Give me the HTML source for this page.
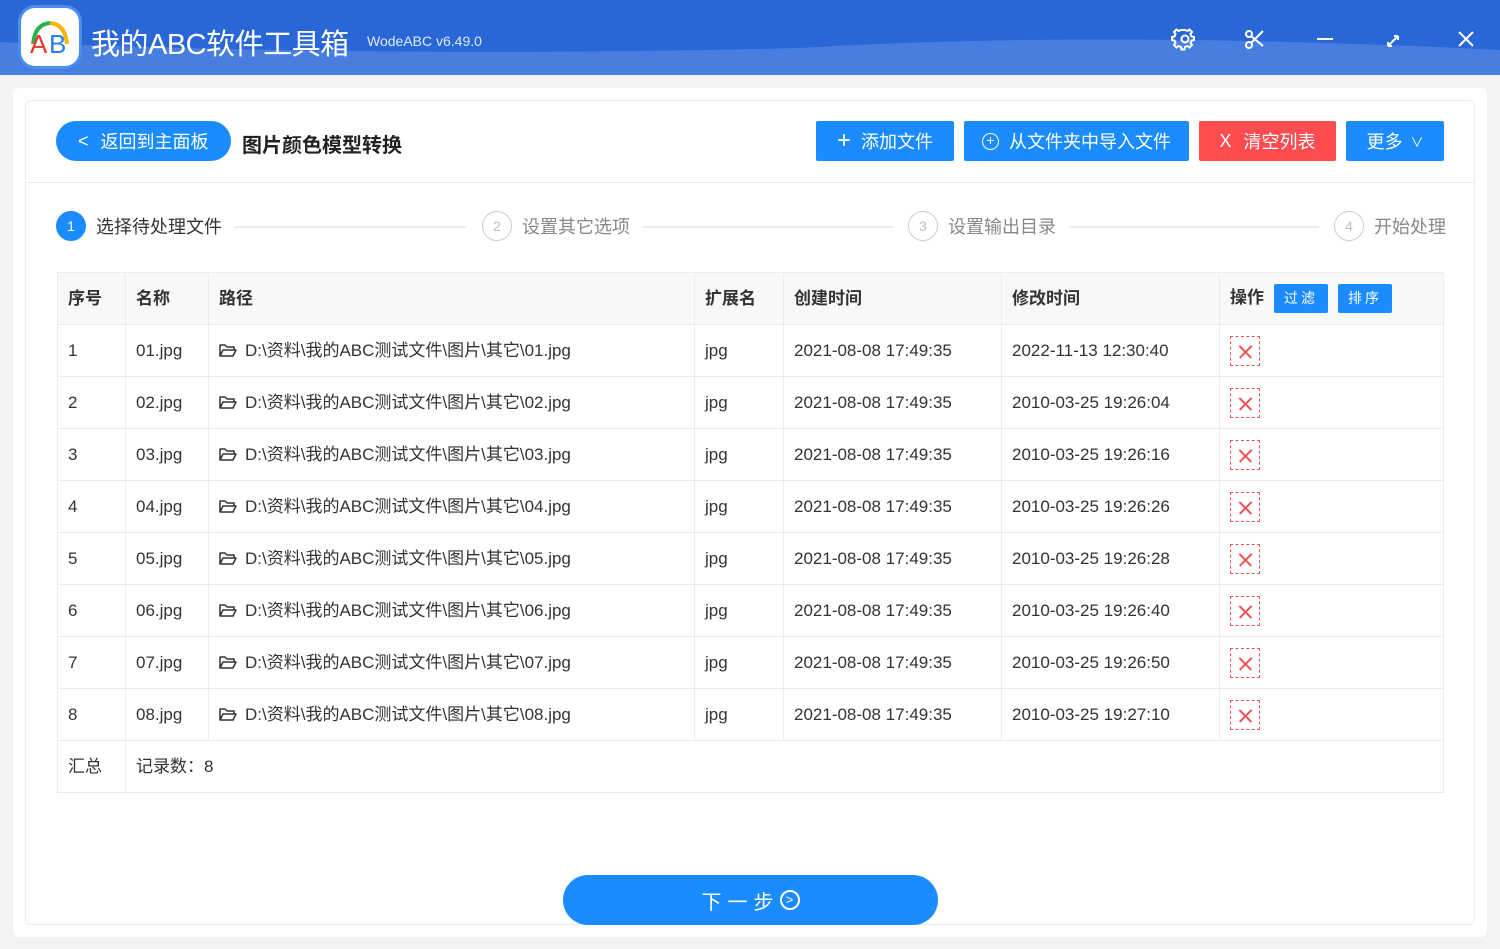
<!DOCTYPE html>
<html><head><meta charset="utf-8"><style>
*{box-sizing:border-box;margin:0;padding:0}
body{width:1500px;height:949px;background:#f3f3f3;font-family:"Liberation Sans","Noto Sans CJK SC",sans-serif;position:relative;overflow:hidden;color:#333}
.hdr{position:absolute;left:0;top:0;width:1500px;height:75px;background:#2a67d6;overflow:hidden}
.abs{position:absolute}
.btn{position:absolute;height:40px;top:121px;color:#fff;font-size:18px;display:flex;align-items:center;justify-content:center;border-radius:2px;background:#1a8cff}
table{position:absolute;left:57px;top:272px;border-collapse:collapse;font-size:17px;color:#333}
td,th{border:1px solid #ececec;text-align:left;padding-left:10px;height:52px;padding-top:0;padding-bottom:0;line-height:20px}
th{background:#f8f8f8;font-weight:bold;height:52px}
.x{display:inline-block;width:30px;height:30px;border:1px dashed #f05050;position:relative;vertical-align:middle}
.x:before,.x:after{content:"";position:absolute;left:6px;top:14px;width:17px;height:1.5px;background:#f05050;transform:rotate(45deg)}
.x:after{transform:rotate(-45deg)}
.step{position:absolute;top:211px;font-size:18px;color:#888;display:flex;align-items:center}
.c{width:30px;height:30px;border-radius:50%;border:1px solid #ccc;color:#bbb;font-size:14px;display:flex;align-items:center;justify-content:center;margin-right:10px}
.line{position:absolute;top:226px;height:2px;background:#ececec}
.tag{display:inline-block;background:#1a8cff;color:#fff;font-size:14px;font-weight:normal;width:54px;text-align:center;height:29px;line-height:29px;border-radius:2px;margin-left:10px;vertical-align:middle;letter-spacing:3px}
.f{display:inline-block;width:18px;height:13px;vertical-align:-1px;margin-right:8px}
</style></head><body>
<div class="hdr">
<svg class="abs" style="left:0;top:0" width="1500" height="75"><path d="M0 42 Q400 58 800 48 Q1100 30 1500 50 L1500 75 L0 75Z" fill="#487ee0"/></svg>
<div class="abs" style="left:21px;top:8px;width:58px;height:58px;border-radius:14px;background:#fff;box-shadow:0 0 0 3px #4a8ef0">
<svg width="58" height="58"><path d="M12 36 Q14 16 29 15" stroke="#2bb24c" stroke-width="4" fill="none"/><path d="M29 15 Q44 16 46 36" stroke="#f6b400" stroke-width="4" fill="none"/><text x="9" y="45" font-size="26" font-family="Liberation Sans" fill="#e33">A</text><text x="28" y="45" font-size="26" font-family="Liberation Sans" fill="#2a7cf6">B</text></svg></div>
<div class="abs" style="left:91px;top:21px;color:#fff;font-size:29px;letter-spacing:-0.5px">我的ABC软件工具箱</div>
<div class="abs" style="left:367px;top:33px;color:#dfe8fa;font-size:14px">WodeABC v6.49.0</div>
<svg class="abs" style="left:1170px;top:25px" width="310" height="30" fill="none" stroke="#fff" stroke-width="2">
<circle cx="15" cy="14" r="3.5"/><path d="M15 5l2.5 1 2-1.5 2.5 2.5-1.5 2 1 2.5 2.5.5v3l-2.5.5-1 2.5 1.5 2-2.5 2.5-2-1.5-2.5 1-.5 2.5h-3l-.5-2.5-2.5-1-2 1.5-2.5-2.5 1.5-2-1-2.5-2.5-.5v-3l2.5-.5 1-2.5-1.5-2 2.5-2.5 2 1.5 2.5-1z"/>
<circle cx="79" cy="9" r="3"/><circle cx="79" cy="20" r="3"/><path d="M81 11l12 10M81 18l12-12"/>
<path d="M147 14h16"/>
<path d="M218 21l10-10M218 21v-4M218 21h4M228 11v4M228 11h-4"/>
<path d="M289 7l14 14M303 7l-14 14"/></svg>
</div>
<div class="abs" style="left:13px;top:88px;width:1474px;height:849px;background:#fff;border-radius:6px"></div>
<div class="abs" style="left:25px;top:100px;width:1450px;height:825px;border:1px solid #ececec;border-radius:6px"></div>
<div class="abs" style="left:26px;top:182px;width:1448px;height:1px;background:#ececec"></div>
<div class="abs" style="left:56px;top:121px;width:175px;height:40px;border-radius:20px;background:#1a8cff;color:#fff;font-size:18px;display:flex;align-items:center;padding-left:22px"><span style="font-size:18px;margin-right:12px">&lt;</span>返回到主面板</div>
<div class="abs" style="left:242px;top:129px;font-size:20px;font-weight:bold;color:#222">图片颜色模型转换</div>
<div class="btn" style="left:816px;width:138px"><span style="font-size:24px;margin-right:10px;font-weight:300">+</span>添加文件</div>
<div class="btn" style="left:964px;width:225px"><span style="display:inline-block;width:17px;height:17px;border:1.5px solid #fff;border-radius:50%;font-size:14px;line-height:13px;text-align:center;margin-right:10px">+</span>从文件夹中导入文件</div>
<div class="btn" style="left:1199px;width:137px;background:#ff4d4f"><span style="margin-right:12px">X</span>清空列表</div>
<div class="btn" style="left:1346px;width:98px">更多 <span style="font-size:13px;margin-left:8px">∨</span></div>
<div class="step" style="left:56px;color:#333"><div class="c" style="background:#1a8cff;border-color:#1a8cff;color:#fff">1</div>选择待处理文件</div>
<div class="line" style="left:234px;width:232px"></div>
<div class="step" style="left:482px"><div class="c">2</div>设置其它选项</div>
<div class="line" style="left:643px;width:250px"></div>
<div class="step" style="left:908px"><div class="c">3</div>设置输出目录</div>
<div class="line" style="left:1069px;width:250px"></div>
<div class="step" style="left:1334px"><div class="c">4</div>开始处理</div>
<svg width="0" height="0" style="position:absolute"><defs><symbol id="fd" viewBox="0 0 18 13"><path d="M1 12V1h5l2 2h7v3M1 12l3-6h13l-3 6z" fill="none" stroke="#333" stroke-width="1.5" stroke-linejoin="round"/></symbol></defs></svg>
<table>
<tr><th style="width:68px">序号</th><th style="width:83px">名称</th><th style="width:486px">路径</th><th style="width:89px">扩展名</th><th style="width:218px">创建时间</th><th style="width:218px">修改时间</th><th style="width:224px">操作<span class="tag">过滤</span><span class="tag">排序</span></th></tr>
<tr><td>1</td><td>01.jpg</td><td><svg class="f"><use href="#fd"/></svg>D:\资料\我的ABC测试文件\图片\其它\01.jpg</td><td>jpg</td><td>2021-08-08 17:49:35</td><td>2022-11-13 12:30:40</td><td><span class="x"></span></td></tr>
<tr><td>2</td><td>02.jpg</td><td><svg class="f"><use href="#fd"/></svg>D:\资料\我的ABC测试文件\图片\其它\02.jpg</td><td>jpg</td><td>2021-08-08 17:49:35</td><td>2010-03-25 19:26:04</td><td><span class="x"></span></td></tr>
<tr><td>3</td><td>03.jpg</td><td><svg class="f"><use href="#fd"/></svg>D:\资料\我的ABC测试文件\图片\其它\03.jpg</td><td>jpg</td><td>2021-08-08 17:49:35</td><td>2010-03-25 19:26:16</td><td><span class="x"></span></td></tr>
<tr><td>4</td><td>04.jpg</td><td><svg class="f"><use href="#fd"/></svg>D:\资料\我的ABC测试文件\图片\其它\04.jpg</td><td>jpg</td><td>2021-08-08 17:49:35</td><td>2010-03-25 19:26:26</td><td><span class="x"></span></td></tr>
<tr><td>5</td><td>05.jpg</td><td><svg class="f"><use href="#fd"/></svg>D:\资料\我的ABC测试文件\图片\其它\05.jpg</td><td>jpg</td><td>2021-08-08 17:49:35</td><td>2010-03-25 19:26:28</td><td><span class="x"></span></td></tr>
<tr><td>6</td><td>06.jpg</td><td><svg class="f"><use href="#fd"/></svg>D:\资料\我的ABC测试文件\图片\其它\06.jpg</td><td>jpg</td><td>2021-08-08 17:49:35</td><td>2010-03-25 19:26:40</td><td><span class="x"></span></td></tr>
<tr><td>7</td><td>07.jpg</td><td><svg class="f"><use href="#fd"/></svg>D:\资料\我的ABC测试文件\图片\其它\07.jpg</td><td>jpg</td><td>2021-08-08 17:49:35</td><td>2010-03-25 19:26:50</td><td><span class="x"></span></td></tr>
<tr><td>8</td><td>08.jpg</td><td><svg class="f"><use href="#fd"/></svg>D:\资料\我的ABC测试文件\图片\其它\08.jpg</td><td>jpg</td><td>2021-08-08 17:49:35</td><td>2010-03-25 19:27:10</td><td><span class="x"></span></td></tr>
<tr><td style="height:48px">汇总</td><td colspan="6">记录数：8</td></tr>
</table>
<div class="abs" style="left:563px;top:875px;width:375px;height:50px;border-radius:25px;background:#1a8cff;color:#fff;font-size:20px;display:flex;align-items:center;justify-content:center;letter-spacing:6px">下一步<span style="display:inline-block;width:20px;height:20px;border:2px solid #fff;border-radius:50%;font-size:13px;line-height:16px;text-align:center;letter-spacing:0">&gt;</span></div>
</body></html>
